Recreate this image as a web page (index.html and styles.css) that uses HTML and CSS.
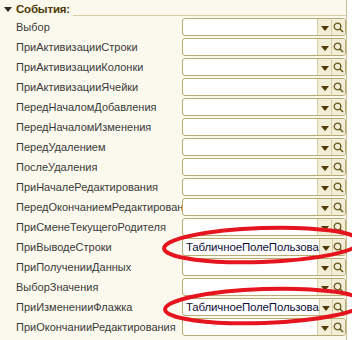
FILE: index.html
```html
<!DOCTYPE html>
<html>
<head>
<meta charset="utf-8">
<link rel="stylesheet" href="styles.css">
</head>
<body>
<div class="page">
  <div class="panel">
    <div class="header">
      <span class="caret"></span>
      <span class="title">События:</span>
      <span class="rule"></span>
    </div>
    <div class="rows">
      <div class="row"><span class="label">Выбор</span><div class="field"><span class="value"></span><span class="btn drop"><i></i></span><span class="btn search"><svg width="11" height="11" viewBox="0 0 11 11"><circle cx="4.5" cy="4.5" r="3.3" fill="none" stroke="#6b5a1e" stroke-width="1.3"/><path d="M7 7l3 3" stroke="#6b5a1e" stroke-width="1.6"/></svg></span></div></div>
      <div class="row"><span class="label">ПриАктивизацииСтроки</span><div class="field"><span class="value"></span><span class="btn drop"><i></i></span><span class="btn search"><svg width="11" height="11" viewBox="0 0 11 11"><circle cx="4.5" cy="4.5" r="3.3" fill="none" stroke="#6b5a1e" stroke-width="1.3"/><path d="M7 7l3 3" stroke="#6b5a1e" stroke-width="1.6"/></svg></span></div></div>
      <div class="row"><span class="label">ПриАктивизацииКолонки</span><div class="field"><span class="value"></span><span class="btn drop"><i></i></span><span class="btn search"><svg width="11" height="11" viewBox="0 0 11 11"><circle cx="4.5" cy="4.5" r="3.3" fill="none" stroke="#6b5a1e" stroke-width="1.3"/><path d="M7 7l3 3" stroke="#6b5a1e" stroke-width="1.6"/></svg></span></div></div>
      <div class="row"><span class="label">ПриАктивизацииЯчейки</span><div class="field"><span class="value"></span><span class="btn drop"><i></i></span><span class="btn search"><svg width="11" height="11" viewBox="0 0 11 11"><circle cx="4.5" cy="4.5" r="3.3" fill="none" stroke="#6b5a1e" stroke-width="1.3"/><path d="M7 7l3 3" stroke="#6b5a1e" stroke-width="1.6"/></svg></span></div></div>
      <div class="row"><span class="label">ПередНачаломДобавления</span><div class="field"><span class="value"></span><span class="btn drop"><i></i></span><span class="btn search"><svg width="11" height="11" viewBox="0 0 11 11"><circle cx="4.5" cy="4.5" r="3.3" fill="none" stroke="#6b5a1e" stroke-width="1.3"/><path d="M7 7l3 3" stroke="#6b5a1e" stroke-width="1.6"/></svg></span></div></div>
      <div class="row"><span class="label">ПередНачаломИзменения</span><div class="field"><span class="value"></span><span class="btn drop"><i></i></span><span class="btn search"><svg width="11" height="11" viewBox="0 0 11 11"><circle cx="4.5" cy="4.5" r="3.3" fill="none" stroke="#6b5a1e" stroke-width="1.3"/><path d="M7 7l3 3" stroke="#6b5a1e" stroke-width="1.6"/></svg></span></div></div>
      <div class="row"><span class="label">ПередУдалением</span><div class="field"><span class="value"></span><span class="btn drop"><i></i></span><span class="btn search"><svg width="11" height="11" viewBox="0 0 11 11"><circle cx="4.5" cy="4.5" r="3.3" fill="none" stroke="#6b5a1e" stroke-width="1.3"/><path d="M7 7l3 3" stroke="#6b5a1e" stroke-width="1.6"/></svg></span></div></div>
      <div class="row"><span class="label">ПослеУдаления</span><div class="field"><span class="value"></span><span class="btn drop"><i></i></span><span class="btn search"><svg width="11" height="11" viewBox="0 0 11 11"><circle cx="4.5" cy="4.5" r="3.3" fill="none" stroke="#6b5a1e" stroke-width="1.3"/><path d="M7 7l3 3" stroke="#6b5a1e" stroke-width="1.6"/></svg></span></div></div>
      <div class="row"><span class="label">ПриНачалеРедактирования</span><div class="field"><span class="value"></span><span class="btn drop"><i></i></span><span class="btn search"><svg width="11" height="11" viewBox="0 0 11 11"><circle cx="4.5" cy="4.5" r="3.3" fill="none" stroke="#6b5a1e" stroke-width="1.3"/><path d="M7 7l3 3" stroke="#6b5a1e" stroke-width="1.6"/></svg></span></div></div>
      <div class="row"><span class="label">ПередОкончаниемРедактирован</span><div class="field"><span class="value"></span><span class="btn drop"><i></i></span><span class="btn search"><svg width="11" height="11" viewBox="0 0 11 11"><circle cx="4.5" cy="4.5" r="3.3" fill="none" stroke="#6b5a1e" stroke-width="1.3"/><path d="M7 7l3 3" stroke="#6b5a1e" stroke-width="1.6"/></svg></span></div></div>
      <div class="row"><span class="label">ПриСменеТекущегоРодителя</span><div class="field"><span class="value"></span><span class="btn drop"><i></i></span><span class="btn search"><svg width="11" height="11" viewBox="0 0 11 11"><circle cx="4.5" cy="4.5" r="3.3" fill="none" stroke="#6b5a1e" stroke-width="1.3"/><path d="M7 7l3 3" stroke="#6b5a1e" stroke-width="1.6"/></svg></span></div></div>
      <div class="row"><span class="label">ПриВыводеСтроки</span><div class="field"><span class="value">ТабличноеПолеПользова</span><span class="btn drop"><i></i></span><span class="btn search"><svg width="11" height="11" viewBox="0 0 11 11"><circle cx="4.5" cy="4.5" r="3.3" fill="none" stroke="#6b5a1e" stroke-width="1.3"/><path d="M7 7l3 3" stroke="#6b5a1e" stroke-width="1.6"/></svg></span></div></div>
      <div class="row"><span class="label">ПриПолученииДанных</span><div class="field"><span class="value"></span><span class="btn drop"><i></i></span><span class="btn search"><svg width="11" height="11" viewBox="0 0 11 11"><circle cx="4.5" cy="4.5" r="3.3" fill="none" stroke="#6b5a1e" stroke-width="1.3"/><path d="M7 7l3 3" stroke="#6b5a1e" stroke-width="1.6"/></svg></span></div></div>
      <div class="row"><span class="label">ВыборЗначения</span><div class="field"><span class="value"></span><span class="btn drop"><i></i></span><span class="btn search"><svg width="11" height="11" viewBox="0 0 11 11"><circle cx="4.5" cy="4.5" r="3.3" fill="none" stroke="#6b5a1e" stroke-width="1.3"/><path d="M7 7l3 3" stroke="#6b5a1e" stroke-width="1.6"/></svg></span></div></div>
      <div class="row"><span class="label">ПриИзмененииФлажка</span><div class="field"><span class="value">ТабличноеПолеПользова</span><span class="btn drop"><i></i></span><span class="btn search"><svg width="11" height="11" viewBox="0 0 11 11"><circle cx="4.5" cy="4.5" r="3.3" fill="none" stroke="#6b5a1e" stroke-width="1.3"/><path d="M7 7l3 3" stroke="#6b5a1e" stroke-width="1.6"/></svg></span></div></div>
      <div class="row"><span class="label">ПриОкончанииРедактирования</span><div class="field"><span class="value"></span><span class="btn drop"><i></i></span><span class="btn search"><svg width="11" height="11" viewBox="0 0 11 11"><circle cx="4.5" cy="4.5" r="3.3" fill="none" stroke="#6b5a1e" stroke-width="1.3"/><path d="M7 7l3 3" stroke="#6b5a1e" stroke-width="1.6"/></svg></span></div></div>
    </div>
  </div>
  <svg class="marks" width="352" height="340" viewBox="0 0 352 340">
    <ellipse cx="262" cy="245" rx="98" ry="17" transform="rotate(-2 262 245)" fill="none" stroke="#e6141e" stroke-width="4"/>
    <ellipse cx="264" cy="306" rx="99" ry="17" transform="rotate(-2 264 306)" fill="none" stroke="#e6141e" stroke-width="4"/>
  </svg>
</div>
</body>
</html>
```

FILE: styles.css
```css
html, body {
  margin: 0;
  padding: 0;
  background: #ffffff;
}
.page {
  position: relative;
  width: 352px;
  height: 340px;
  overflow: hidden;
  background: #ffffff;
}
.panel {
  width: 347px;
  height: 340px;
  background: #fbf9ee;
  border-right: 1px solid #c9bf98;
  box-sizing: border-box;
}
.header {
  height: 18px;
  display: flex;
  align-items: center;
  padding-left: 4px;
}
.caret {
  width: 0;
  height: 0;
  border-left: 4px solid transparent;
  border-right: 4px solid transparent;
  border-top: 5px solid #2a2a2a;
  margin-right: 4px;
  margin-top: 1px;
}
.title {
  font-family: "Liberation Sans", Arial, sans-serif;
  font-weight: bold;
  font-size: 11.5px;
  color: #4f3a05;
  letter-spacing: -0.2px;
}
.rule {
  flex: 1;
  height: 1px;
  background: #d6cca6;
  margin-left: 3px;
  margin-top: 13px;
}
.rows {
  display: flex;
  flex-direction: column;
  gap: 2px;
}
.row {
  display: flex;
  align-items: center;
  height: 18px;
}
.label {
  width: 166px;
  padding-left: 16px;
  font-family: "Liberation Sans", Arial, sans-serif;
  font-size: 11px;
  color: #3a3a3a;
  white-space: nowrap;
  overflow: hidden;
}
.field {
  width: 164px;
  height: 18px;
  box-sizing: border-box;
  border: 1px solid #b9ab74;
  border-radius: 3px;
  background: #ffffff;
  display: flex;
  align-items: stretch;
  overflow: hidden;
}
.value {
  flex: 1;
  white-space: nowrap;
  font-family: "Liberation Sans", Arial, sans-serif;
  font-size: 11.5px;
  letter-spacing: -0.15px;
  color: #10103a;
  line-height: 16px;
  padding-left: 3px;
}
.btn {
  width: 13px;
  background: #f3eed8;
  border-left: 1px solid #d8cfa8;
  display: flex;
  align-items: center;
  justify-content: center;
}
.drop i {
  width: 0;
  height: 0;
  border-left: 4px solid transparent;
  border-right: 4px solid transparent;
  border-top: 5px solid #4f3a05;
  margin-top: 2px;
}
.marks {
  position: absolute;
  left: 0;
  top: 0;
  pointer-events: none;
}
```
